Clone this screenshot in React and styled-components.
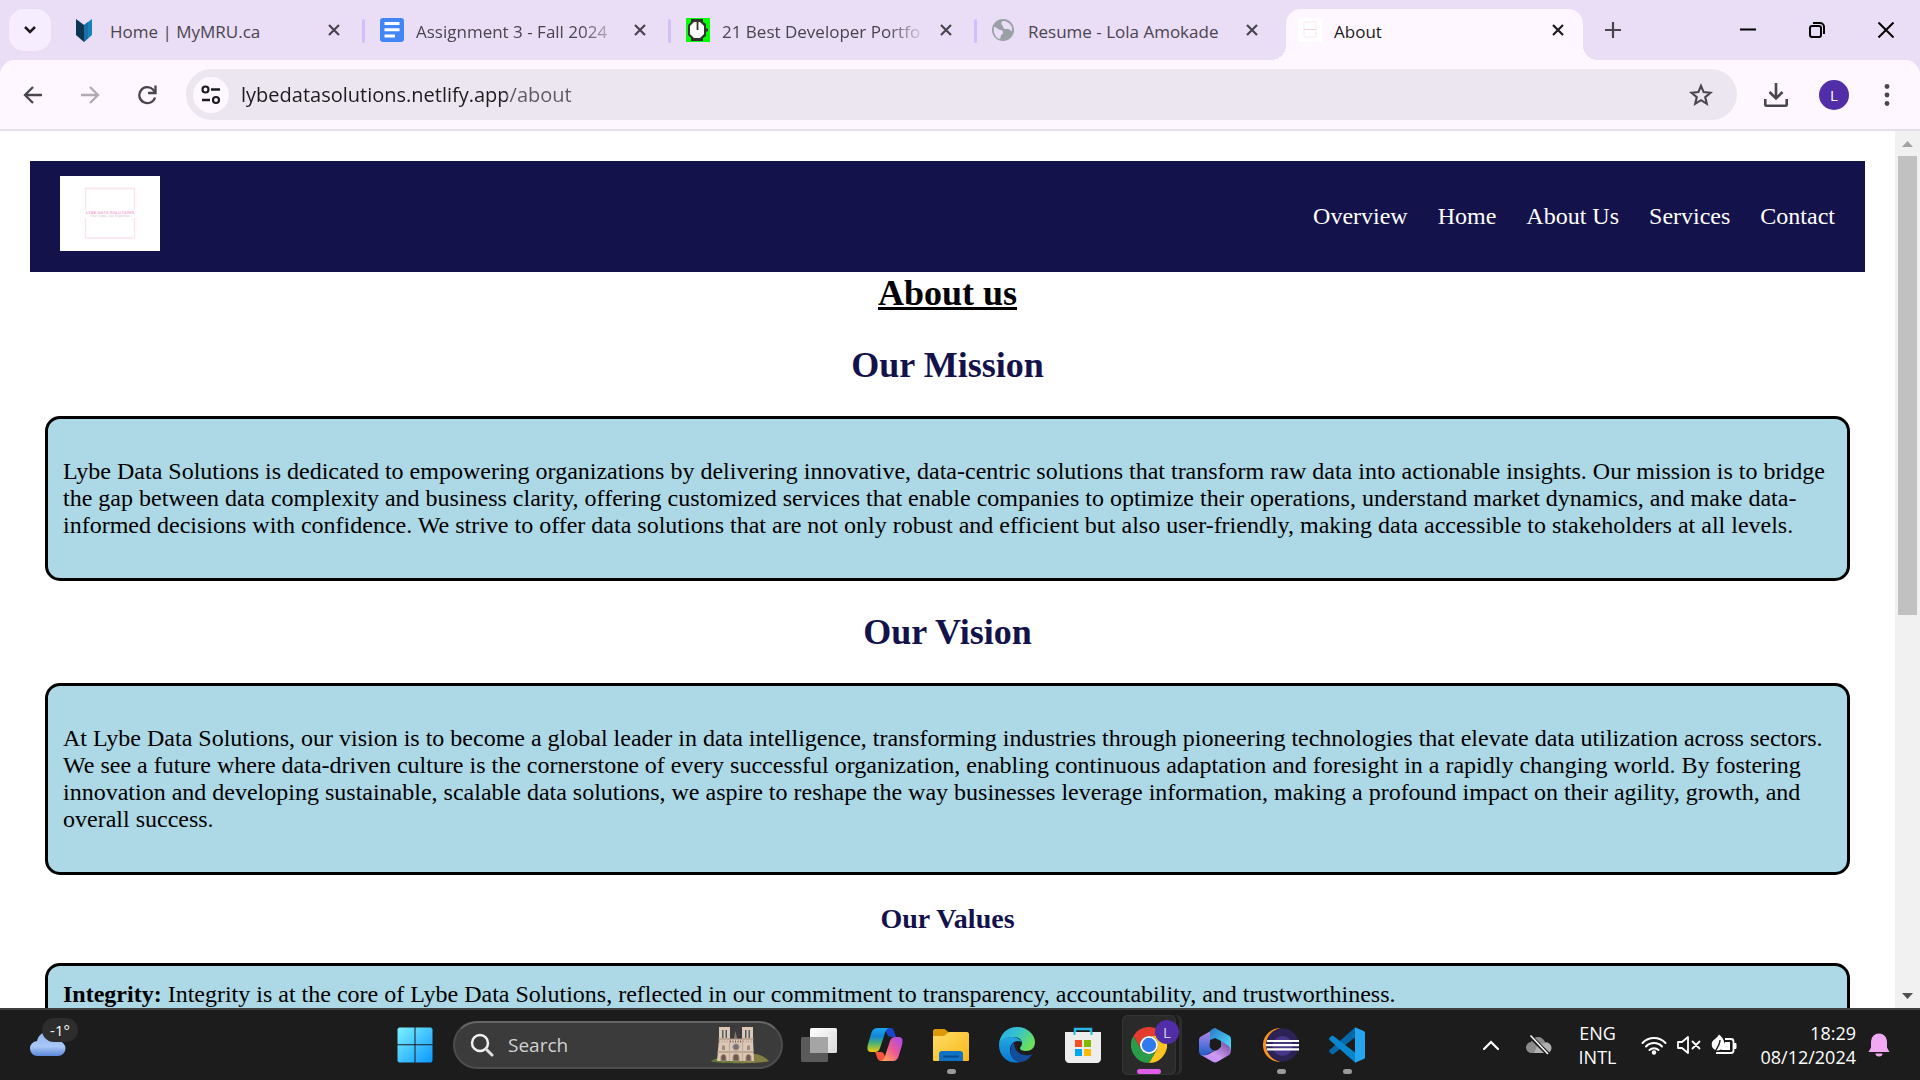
import React from "react";
import styled, { createGlobalStyle, css } from "styled-components";

const ui = `"Open Sans", "Noto Sans", sans-serif`;

const GlobalStyle = createGlobalStyle`
  *, *::before, *::after { box-sizing: border-box; }
  body { margin: 0; background: #fff; overflow: hidden; }
  button, input { font: inherit; color: inherit; }
  h1, h2, h3, p { margin: 0; }
`;

/* ---------- shell ---------- */

const Shell = styled.div`
  display: flex;
  flex-direction: column;
  height: 100vh;
  font-family: ${ui};
`;

const IconButton = styled.button`
  display: flex;
  align-items: center;
  justify-content: center;
  flex: none;
  width: ${(p) => p.$w}px;
  height: ${(p) => p.$h || p.$w}px;
  padding: 0;
  border: 0;
  border-radius: ${(p) => p.$radius || 0}px;
  background: ${(p) => p.$bg || "transparent"};
  color: ${(p) => p.$color || "#49454f"};
`;

/* ---------- tab strip ---------- */

const TabStrip = styled.header`
  display: flex;
  align-items: flex-end;
  height: 60px;
  flex: none;
  padding-left: 9px;
  background: #eaddf6;
`;

const StripCell = styled.div`
  display: flex;
  align-items: center;
  height: 51px;
  padding-bottom: 9px;
`;

const TabList = styled.div`
  display: flex;
  margin-left: 11px;
`;

const activeTab = css`
  background: #fef7ff;
  border-radius: 15px 15px 0 0;
  color: #1d1b20;
  &::before,
  &::after {
    content: "";
    position: absolute;
    bottom: 0;
    width: 15px;
    height: 15px;
  }
  &::before {
    right: 100%;
    background: radial-gradient(circle at 0 0, transparent 15px, #fef7ff 15px);
  }
  &::after {
    left: 100%;
    background: radial-gradient(circle at 100% 0, transparent 15px, #fef7ff 15px);
  }
`;

const Tab = styled.div`
  position: relative;
  display: flex;
  align-items: center;
  gap: 12px;
  width: 297px;
  height: 51px;
  padding: 0 13px 9px 12px;
  color: #49454f;
  ${(p) => p.$active && activeTab}
`;

const TabDivider = styled.div`
  width: 3px;
  height: 24px;
  margin: 10px 3px 0;
  background: #d3bdfc;
  border-radius: 2px;
  visibility: ${(p) => (p.$hidden ? "hidden" : "visible")};
`;

const TabTitle = styled.button`
  flex: 1;
  min-width: 0;
  padding: 3px 0 0;
  border: 0;
  background: none;
  text-align: left;
  font-size: 17px;
  line-height: 24px;
  white-space: nowrap;
  mask-image: ${(p) => (p.$fade ? "linear-gradient(to right, #000 165px, transparent 205px)" : "none")};
`;

const WindowControls = styled.div`
  display: flex;
  align-self: stretch;
  margin-left: auto;
`;

/* ---------- toolbar ---------- */

const ToolbarBack = styled.div`
  flex: none;
  background: #eaddf6;
`;

const Toolbar = styled.div`
  display: flex;
  align-items: center;
  height: 71px;
  padding: 0 9px;
  background: #fef7ff;
  border-bottom: 2px solid #e7dfec;
  border-radius: 15px 15px 0 0;
`;

const NavButtons = styled.div`
  display: flex;
  gap: 9px;
  margin-right: 15px;
`;

const AddressBar = styled.form`
  display: flex;
  align-items: center;
  flex: 1;
  height: 51px;
  padding: 0 12px 0 7px;
  background: #ece6f0;
  border-radius: 26px;
`;

const AddressInput = styled.input`
  flex: 1;
  min-width: 0;
  margin-left: 12px;
  padding: 0;
  border: 0;
  outline: 0;
  font-size: 20px;
  line-height: 30px;
  color: #1d1b20;
  background: linear-gradient(to right, #1d1b20 266px, #5d5963 266px);
  background-clip: text;
  -webkit-text-fill-color: transparent;
`;

const ToolbarActions = styled.div`
  display: flex;
  align-items: center;
  margin-left: 12px;
`;

const ProfileButton = styled.button`
  width: 30px;
  height: 30px;
  margin: 0 14px 0 16px;
  padding: 0;
  border: 0;
  border-radius: 50%;
  background: #512da8;
  color: #fff;
  font-size: 15px;
  line-height: 30px;
`;

/* ---------- web page ---------- */

const Viewport = styled.div`
  display: flex;
  flex: 1;
  min-height: 0;
  background: #fff;
`;

const Page = styled.div`
  flex: 1;
  min-width: 0;
  padding: 30px 30px 0;
  overflow: hidden;
  font-family: "Liberation Serif", "Times New Roman", serif;
  font-size: 24px;
  line-height: 27px;
  color: #000;
`;

const SiteHeader = styled.div`
  display: flex;
  align-items: center;
  justify-content: space-between;
  padding: 15px 30px 21px;
  background: #13124b;
`;

const Logo = styled.a`
  display: block;
  width: 100px;
  height: 75px;
  background: #fff;
`;

const SiteNav = styled.nav`
  display: flex;
  gap: 30px;
  padding-top: 6px;
`;

const NavLink = styled.a`
  color: #fff;
  text-decoration: none;
`;

const Content = styled.main`
  display: flex;
  flex-direction: column;
  padding: 0 15px;
`;

const PageTitle = styled.h1`
  text-align: center;
  font-size: 36px;
  line-height: 42px;
  text-decoration: underline;
  text-decoration-thickness: 3px;
`;

const SectionTitle = styled.h2`
  margin: 30px 0;
  text-align: center;
  font-size: 36px;
  line-height: 42px;
  color: #13124b;
`;

const SubTitle = styled.h3`
  margin: 28px 0;
  text-align: center;
  font-size: 28px;
  line-height: 32px;
  color: #13124b;
`;

const Card = styled.section`
  padding: ${(p) => (p.$tight ? 15 : 39)}px 15px;
  background: #add8e6;
  border: 3px solid #000;
  border-radius: 15px;
`;

const Scrollbar = styled.div`
  display: flex;
  flex-direction: column;
  width: 25px;
  padding: 0 3px 0 3px;
  background: #f1f1f1;
`;

const Thumb = styled.div`
  flex: 459;
  background: #c1c1c1;
`;

const Track = styled.div`
  flex: 368;
`;

/* ---------- taskbar ---------- */

const Taskbar = styled.footer`
  display: flex;
  align-items: center;
  height: 72px;
  flex: none;
  padding: 0 30px 0 18px;
  background: #1c1c1c;
  border-top: 2px solid #3f3f3f;
  color: #fff;
`;

const Weather = styled.button`
  position: relative;
  display: flex;
  align-items: flex-end;
  width: 60px;
  height: 60px;
  padding: 0 0 19px 12px;
  border: 0;
  background: none;
`;

const Temperature = styled.span`
  position: absolute;
  top: 3px;
  right: 0;
  width: 36px;
  height: 24px;
  border-radius: 12px;
  background: #2d2d2d;
  font-size: 15px;
  line-height: 24px;
  text-align: center;
`;

const AppArea = styled.div`
  display: flex;
  align-items: center;
  margin-left: 304px;
`;

const SearchBox = styled.label`
  display: flex;
  align-items: center;
  width: 330px;
  height: 48px;
  margin: 0 3px 0 5px;
  padding: 0 12px 0 15px;
  gap: 14px;
  background: #3b3b3b;
  border: 2px solid #4d4d4d;
  border-top-color: #666;
  border-radius: 24px;
`;

const SearchInput = styled.input`
  flex: 1;
  min-width: 0;
  padding: 0;
  border: 0;
  outline: 0;
  background: none;
  font-size: 19px;
  line-height: 28px;
  &::placeholder {
    color: #d2d2d2;
    opacity: 1;
  }
`;

const AppButton = styled.button`
  position: relative;
  display: flex;
  align-items: center;
  justify-content: center;
  width: 54px;
  height: 60px;
  margin: 0 6px;
  padding: 0;
  border: 0;
  border-radius: 6px;
  background: ${(p) => (p.$state === "active" ? "#2a2a2a" : "transparent")};
  box-shadow: ${(p) =>
    p.$state === "active" ? "inset 0 0 0 1px #353535, 3px 0 0 #1c1c1c, 6px 0 0 #2d2d2d" : "none"};
  &::after {
    content: "";
    display: ${(p) => (p.$state ? "block" : "none")};
    position: absolute;
    bottom: 1px;
    width: ${(p) => (p.$state === "active" ? 24 : 9)}px;
    height: 5px;
    border-radius: 3px;
    background: ${(p) => (p.$state === "active" ? "#df5ee8" : "#9a9a9a")};
  }
`;

const AppBadge = styled.span`
  position: absolute;
  top: 5px;
  right: -3px;
  width: 24px;
  height: 24px;
  border-radius: 50%;
  background: #512da8;
  color: #d8cfec;
  font-size: 15px;
  line-height: 24px;
`;

const Tray = styled.div`
  display: flex;
  align-items: center;
  margin-left: auto;
  font-size: 18px;
  line-height: 24px;
`;

const TrayButton = styled.button`
  display: flex;
  align-items: center;
  gap: ${(p) => p.$gap || 0}px;
  height: 60px;
  margin-left: ${(p) => p.$space || 0}px;
  padding: 0;
  border: 0;
  background: none;
`;

const Stack = styled.span`
  display: flex;
  flex-direction: column;
  align-items: ${(p) => p.$align};
`;

/* ---------- drawings ---------- */

const Svg = ({ w = 24, h = w, box = `0 0 ${w} ${h}`, children, ...rest }) => (
  <svg width={w} height={h} viewBox={box} fill="none" aria-hidden="true" {...rest}>
    {children}
  </svg>
);

const CloseIcon = () => (
  <Svg w={12}><path d="M1 1l10 10M11 1L1 11" stroke="currentColor" strokeWidth="2.2" /></Svg>
);

const MruIcon = () => (
  <Svg w={24}>
    <path d="M2 1l8 6v17l-8-7z" fill="#0c3551" />
    <path d="M18 1l-8 6v17l8-7z" fill="#1482bd" />
    <path d="M10 7l4-3v16l-4 4z" fill="#1a70a6" />
  </Svg>
);

const DocsIcon = () => (
  <Svg w={24}>
    <rect width="24" height="24" rx="3" fill="#4285f4" />
    <path d="M4.500 5.500h15M4.500 11.800h15M4.500 18h10.500" stroke="#fff" strokeWidth="3" />
  </Svg>
);

const WatchIcon = () => (
  <Svg w={24}>
    <path fill="#0f0" d="M0 0h24v24H0z" />
    <path d="M5 1h12v3l3 2v4l2 1v2l-2 1v4l-3 2v3H5v-3l-3-3V7l3-3z" fill="#333" />
    <path d="M8 4h6l4 4v8l-4 4H8l-4-4V8z" fill="#fff" />
    <path d="M11.500 4v8" stroke="#333" strokeWidth="1.800" />
  </Svg>
);

const GlobeIcon = () => (
  <Svg w={24}>
    <circle cx="11" cy="12" r="11" fill="#9aa0a6" />
    <path d="M2 9c3 0 3 2 6 3 3 0 3 1 3 3s-2 1-2 3l-1 3C4 20 1 16 2 9zM12 3c-3 0-3 2-2 4 2 1 0 3 3 4h3c2 0 2 2 4 2 1-4-2-9-8-10z" fill="#eaddf6" />
  </Svg>
);

const LybeIcon = () => (
  <Svg w={24}>
    <path fill="#fff" d="M0 0h24v24H0z" />
    <path d="M6 4h12v15H6z" stroke="#fbe6f0" />
    <path d="M6 11.500h12" stroke="#f6cfe1" />
  </Svg>
);

const LogoArt = () => (
  <Svg w={100} h={75}>
    <path d="M25.500 34V12.500h49V34M25.500 42v20h49V42" stroke="#fbe2f0" strokeWidth="1.400" />
    <text x="50" y="37.500" textAnchor="middle" fontFamily="Liberation Sans, sans-serif" fontWeight="bold" fontSize="4.200" textRendering="geometricPrecision" fill="#f5a9d3">LYBE DATA SOLUTIONS</text>
    <text x="50" y="41" textAnchor="middle" fontFamily="Liberation Sans, sans-serif" fontSize="3.600" textRendering="geometricPrecision" fill="#d9bfd3">Your Data, Our Expertise</text>
  </Svg>
);

const WindowsIcon = () => (
  <Svg w={36}>
    <defs>
      <linearGradient id="win" x1="0" y1="0" x2="1" y2="1">
        <stop stopColor="#7cf1ff" /><stop offset="1" stopColor="#0a97ff" />
      </linearGradient>
    </defs>
    <path d="M2 .5h15.500v16.800H.5V2zM18.500.5H34l1.500 1.500v15.300h-17zM.5 18.300h17v17.200H2L.5 34zM18.500 18.300h17V34L34 35.500H18.500z" fill="url(#win)" />
  </Svg>
);

const CathedralIcon = () => (
  <Svg w={58} h={38}>
    <path d="M0 35c8-4 14-4 20-4 10 0 16-3 24-3 4 0 10 3 14 7-8 3-50 3-58 0z" fill="#827f43" />
    <path d="M0 35c6-4 10-4 20-3l10 4c-10 1-25 1-30-1z" fill="#5c7a35" />
    <path d="M24.500 5l2 9h-4z" fill="#85766f" />
    <path d="M8 1h11v12h12V1h11v12l1 22H6l2-22z" fill="#dcc7b5" />
    <path d="M11 4h1.500v8H11zM14.500 4H16v8h-1.500zM34 4h1.500v8H34zM37.500 4H39v8h-1.500z" fill="#4d6068" />
    <path d="M7 13h36M6 26h37" stroke="#a08977" strokeWidth="1.200" />
    <path d="M19 15.500h12" stroke="#6e5c52" strokeWidth="2" strokeDasharray="1 1.500" />
    <path d="M8 15.500h10M32 15.500h10" stroke="#b59f8f" strokeWidth="2" strokeDasharray="1 1.500" />
    <circle cx="25" cy="21" r="3.200" fill="#75707b" stroke="#b59d8b" />
    <path d="M11 24v-4a2 2 0 013 0v4zM36 24v-4a2 2 0 013 0v4z" fill="#a08c7e" />
    <path d="M10 35v-4a2.500 2.500 0 015 0v4zM22 35v-4a3 3 0 016 0v4zM35 35v-4a2.500 2.500 0 015 0v4z" fill="#6d5950" stroke="#a98d79" />
    <path d="M18.500 13v22M31.500 13v22" stroke="#c2aa97" strokeWidth="1.300" />
  </Svg>
);

const TaskViewIcon = () => (
  <Svg w={36}>
    <defs>
      <linearGradient id="tvw" x1="0" y1="0" x2="1" y2="1">
        <stop stopColor="#fff" /><stop offset="1" stopColor="#d9d9d9" />
      </linearGradient>
    </defs>
    <rect x="9" y="1" width="27" height="25" rx="1.500" fill="url(#tvw)" />
    <rect y="10" width="27" height="25" rx="1.500" fill="#5a5a5a" />
    <path d="M9 10h18v16H9z" fill="#a5a5a5" />
  </Svg>
);

const CopilotIcon = () => (
  <Svg w={36}>
    <defs>
      <linearGradient id="cpa" x1="0" y1="0" x2="0" y2="1">
        <stop stopColor="#1ba4ee" /><stop offset=".35" stopColor="#1286d8" />
        <stop offset=".65" stopColor="#4fb56c" /><stop offset="1" stopColor="#f3cb0b" />
      </linearGradient>
      <linearGradient id="cpb" x1="1" y1="0" x2="0" y2="1">
        <stop stopColor="#a04af0" /><stop offset=".5" stopColor="#ee5a94" /><stop offset="1" stopColor="#ffb14a" />
      </linearGradient>
    </defs>
    <path d="M17 1h6c3 0 4 2 5 6l1 3h-4c-3 0-4-1-5-3z" fill="#1b45c9" />
    <path d="M19 34h-5c-3 0-4-3-5-7l-1-2h6c2 0 3 2 4 4z" fill="#f5553d" />
    <path d="M10 1h12c-3 1-4 4-5 8l-4 12c-1 3-3 4-5 4H4c-4 0-4-4-3-8l3-10c1-4 3-6 6-6z" fill="url(#cpa)" />
    <path d="M26 34H14c3-1 4-4 5-8l4-12c1-3 3-4 5-4h4c4 0 4 4 3 8l-3 10c-1 4-3 6-6 6z" fill="url(#cpb)" />
  </Svg>
);

const FolderIcon = () => (
  <Svg w={36}>
    <defs>
      <linearGradient id="fold" x1="0" y1="0" x2="1" y2="1">
        <stop stopColor="#ffdc6b" /><stop offset="1" stopColor="#f9b916" />
      </linearGradient>
    </defs>
    <path d="M0 4c0-1 1-2 2-2h9c2 0 3 3 5 3v5H0z" fill="#dc9a06" />
    <path d="M0 9h10c3 0 4-4 7-4h17c1 0 2 1 2 2v26c0 1-1 1-2 1H2c-1 0-2 0-2-1z" fill="url(#fold)" />
    <path d="M6 34v-7c0-2 1-3 3-3h18c2 0 3 1 3 3v7z" fill="#0f72c6" />
    <path d="M11 29.500h14" stroke="#0a4a88" strokeWidth="2" strokeLinecap="round" />
  </Svg>
);

const EdgeIcon = () => (
  <Svg w={36}>
    <defs>
      <linearGradient id="eda" x1="0" y1="0" x2="1" y2=".5">
        <stop stopColor="#27a9e8" /><stop offset=".5" stopColor="#35c3cf" /><stop offset="1" stopColor="#6be05a" />
      </linearGradient>
      <linearGradient id="edb" x1="0" y1="0" x2="0" y2="1">
        <stop stopColor="#23a6e2" /><stop offset="1" stopColor="#0879d2" />
      </linearGradient>
    </defs>
    <path d="M0 17C1 7 8 0 18 0c11 0 18 8 18 15 0 6-4 9-9 9-4 0-6-1-6-3 0-1 2-2 2-5 0-4-4-6-9-6C8 10 2 12 0 17z" fill="url(#eda)" />
    <path d="M0 18c0-5 5-8 12-8 5 0 10 2 11 5-7-3-12 2-12 8 0 6 4 11 10 12-12 3-21-6-21-17z" fill="url(#edb)" />
    <path d="M15 15c-6 6-5 17 6 20 6 0 10-4 12-8-6 3-18 1-18-12z" fill="#134d9b" />
  </Svg>
);

const StoreIcon = () => (
  <Svg w={36}>
    <path d="M10 8V2h16v6" stroke="#29b5e8" strokeWidth="2.500" />
    <path d="M0 5h36v27c0 2-2 4-4 4H4c-2 0-4-2-4-4z" fill="#ededed" />
    <path d="M9.500 8V5M26.500 8V5" stroke="#29b5e8" strokeWidth="2" />
    <path d="M10 13h7v7h-7z" fill="#f25022" /><path d="M19 13h7v7h-7z" fill="#7fba00" />
    <path d="M10 22h7v7h-7z" fill="#00a4ef" /><path d="M19 22h7v7h-7z" fill="#ffb900" />
  </Svg>
);

const ChromeIcon = () => (
  <Svg w={36}>
    <path d="M2.400 9A18 18 0 0133.600 9H18a9 9 0 00-7.800 13.500z" fill="#e33b2e" />
    <path d="M33.600 9A18 18 0 0118 36l7.800-13.500A9 9 0 0018 9z" fill="#fcc31e" />
    <path d="M18 36A18 18 0 012.400 9l7.800 13.500A9 9 0 0025.800 22.500z" fill="#2a9d4a" />
    <circle cx="18" cy="18" r="9" fill="#fff" /><circle cx="18" cy="18" r="7.200" fill="#2f7bee" />
  </Svg>
);

const M365Icon = () => (
  <Svg w={36}>
    <defs>
      <linearGradient id="m3a" x1="0" y1="0" x2="0" y2="1">
        <stop stopColor="#c58be6" /><stop offset=".6" stopColor="#5b72dd" /><stop offset="1" stopColor="#1b5fc4" />
      </linearGradient>
      <linearGradient id="m3b" x1="0" y1="0" x2="1" y2="1">
        <stop stopColor="#2a79c9" /><stop offset="1" stopColor="#52e6ff" />
      </linearGradient>
      <linearGradient id="m3c" x1="0" y1="1" x2="1" y2="0">
        <stop stopColor="#b883f5" /><stop offset=".4" stopColor="#cf9af5" /><stop offset="1" stopColor="#6a4796" />
      </linearGradient>
    </defs>
    <path d="M19 1L4 9.500c-1 .5-2 2-2 3V24c0 3 2 5 5 5l11-6-5-3v-8z" fill="url(#m3a)" />
    <path d="M13 13V5c0-2 2-3 5-4l14 7.500c1 .5 2 2 2 3.500v12l-10-6v-4l-6-3z" fill="url(#m3b)" />
    <path d="M4 28c3 1 6 0 8-1l12-7v-6l8 5 2 4c0 3-1 4-2 5l-12 7c-1 .5-3 .5-4 0z" fill="url(#m3c)" />
    <circle cx="18" cy="18" r="5.500" fill="#1c1c1c" />
  </Svg>
);

const EclipseIcon = () => (
  <Svg w={36}>
    <path d="M18 1C8 1 0 8 0 18s8 17 18 17C9 33 5 27 5 18S9 3 18 1z" fill="#f7941e" />
    <circle cx="19.500" cy="18" r="16.500" fill="#2c2255" />
    <circle cx="19.500" cy="19" r="10" fill="#473788" />
    <path d="M4 14h32M3 18.200h33M4 22.400h32" stroke="#fff" strokeWidth="2.200" />
  </Svg>
);

const VsCodeIcon = () => (
  <Svg w={36}>
    <path d="M26 .5v10L4.500 27c-.7.500-1.500.5-2 0L.6 25.200c-.7-.7-.7-1.700 0-2.300z" fill="#0568a8" />
    <path d="M26 35.500v-10L4.500 9c-.7-.5-1.500-.5-2 0L.6 10.800c-.7.700-.7 1.700 0 2.300z" fill="#0a86cf" />
    <path d="M26 .2L34.700 4c.8.400 1.300 1 1.300 2v24c0 1-.5 1.600-1.300 2L26 35.800z" fill="#24a5ef" />
  </Svg>
);

const WeatherIcon = () => (
  <Svg w={36} h={24}>
    <defs>
      <linearGradient id="cld" x1="0" y1="0" x2="0" y2="1">
        <stop stopColor="#8fb4f2" /><stop offset=".6" stopColor="#aac8f7" /><stop offset="1" stopColor="#5b87d8" />
      </linearGradient>
    </defs>
    <path d="M8 24a7.500 7.500 0 01-1-15C8 4 12 0 17 0c6 0 10 3 11 9a7.500 7.500 0 010 15z" fill="url(#cld)" />
  </Svg>
);

const tabs = [
  { title: "Home | MyMRU.ca", Icon: MruIcon },
  { title: "Assignment 3 - Fall 2024", Icon: DocsIcon, fade: true },
  { title: "21 Best Developer Portfo", Icon: WatchIcon, fade: true },
  { title: "Resume - Lola Amokade", Icon: GlobeIcon },
  { title: "About", Icon: LybeIcon, active: true },
];

const apps = [
  { name: "Task view", Icon: TaskViewIcon },
  { name: "Copilot", Icon: CopilotIcon },
  { name: "File Explorer", Icon: FolderIcon, state: "open" },
  { name: "Edge", Icon: EdgeIcon },
  { name: "Microsoft Store", Icon: StoreIcon },
  { name: "Chrome", Icon: ChromeIcon, state: "active", badge: "L" },
  { name: "Microsoft 365", Icon: M365Icon },
  { name: "Eclipse", Icon: EclipseIcon, state: "open" },
  { name: "Visual Studio Code", Icon: VsCodeIcon, state: "open" },
];

export default function App() {
  return (
    <Shell>
      <GlobalStyle />
      <TabStrip>
        <StripCell>
          <IconButton $w={42} $radius={15} $bg="#f6edff" $color="#1d1b20" aria-label="Search tabs">
            <Svg w={14} h={10}><path d="M2 2l5 5 5-5" stroke="currentColor" strokeWidth="2.500" /></Svg>
          </IconButton>
        </StripCell>
        <TabList>
          {tabs.map(({ title, Icon, active, fade }, i) => (
            <React.Fragment key={title}>
              <Tab $active={active}>
                <Icon />
                <TabTitle $fade={fade}>{title}</TabTitle>
                <IconButton $w={24} $color="inherit" aria-label={`Close ${title}`}><CloseIcon /></IconButton>
              </Tab>
              <TabDivider $hidden={i > 2} />
            </React.Fragment>
          ))}
        </TabList>
        <StripCell>
          <IconButton $w={42} aria-label="New tab">
            <Svg w={16}><path d="M8 0v16M0 8h16" stroke="currentColor" strokeWidth="2.200" /></Svg>
          </IconButton>
        </StripCell>
        <WindowControls>
          <IconButton $w={69} $h={60} $color="#000" aria-label="Minimize">
            <Svg w={16}><path d="M0 7.500h16" stroke="currentColor" strokeWidth="2" /></Svg>
          </IconButton>
          <IconButton $w={69} $h={60} $color="#000" aria-label="Restore">
            <Svg w={16}>
              <rect x="1" y="4" width="11" height="11" rx="2" stroke="currentColor" strokeWidth="2" />
              <path d="M4 1h7a4 4 0 014 4v7" stroke="currentColor" strokeWidth="2" />
            </Svg>
          </IconButton>
          <IconButton $w={69} $h={60} $color="#000" aria-label="Close window">
            <Svg w={16}><path d="M.5.5l15 15M15.500.5l-15 15" stroke="currentColor" strokeWidth="2" /></Svg>
          </IconButton>
        </WindowControls>
      </TabStrip>

      <ToolbarBack>
        <Toolbar>
          <NavButtons>
            <IconButton $w={48} aria-label="Back">
              <Svg w={20}><path d="M19 10H2M10 2l-8 8 8 8" stroke="currentColor" strokeWidth="2.300" /></Svg>
            </IconButton>
            <IconButton $w={48} $color="#b0aab4" aria-label="Forward">
              <Svg w={20}><path d="M1 10h17M10 2l8 8-8 8" stroke="currentColor" strokeWidth="2.300" /></Svg>
            </IconButton>
            <IconButton $w={48} aria-label="Reload">
              <Svg w={20}>
                <path d="M18 12.500A8 8 0 1116 4.500l2 2.500" stroke="currentColor" strokeWidth="2.300" />
                <path d="M18.500.5v7.500H11" stroke="currentColor" strokeWidth="2.300" />
              </Svg>
            </IconButton>
          </NavButtons>
          <AddressBar onSubmit={(e) => e.preventDefault()}>
            <IconButton type="button" $w={36} $radius={18} $bg="#fef7ff" $color="#1d1b20" aria-label="View site information">
              <Svg w={20}>
                <circle cx="4.500" cy="4.500" r="3" stroke="currentColor" strokeWidth="2.200" />
                <path d="M10 4.500h9M1 15h8" stroke="currentColor" strokeWidth="2.400" />
                <circle cx="15" cy="15" r="3" stroke="currentColor" strokeWidth="2.200" />
              </Svg>
            </IconButton>
            <AddressInput aria-label="Address and search bar" defaultValue="lybedatasolutions.netlify.app/about" />
            <IconButton type="button" $w={48} aria-label="Bookmark this tab">
              <Svg w={24}>
                <path d="M12 2.800l2.600 6.300 6.800.6-5.200 4.400 1.600 6.700-5.800-3.600-5.800 3.600 1.600-6.700-5.200-4.400 6.800-.6z" stroke="currentColor" strokeWidth="2.100" />
              </Svg>
            </IconButton>
          </AddressBar>
          <ToolbarActions>
            <IconButton $w={54} $h={48} aria-label="Downloads">
              <Svg w={24}>
                <path d="M12 0v15M5.500 9l6.500 6.500L18.500 9" stroke="currentColor" strokeWidth="2.600" />
                <path d="M1.300 16v5.500c0 .7.500 1.200 1.200 1.200h19c.7 0 1.200-.5 1.200-1.200V16" stroke="currentColor" strokeWidth="2.600" />
              </Svg>
            </IconButton>
            <ProfileButton aria-label="Profile L">L</ProfileButton>
            <IconButton $w={48} aria-label="Menu">
              <Svg w={6} h={22}>
                <g fill="currentColor"><circle cx="3" cy="2.500" r="2.400" /><circle cx="3" cy="11" r="2.400" /><circle cx="3" cy="19.500" r="2.400" /></g>
              </Svg>
            </IconButton>
          </ToolbarActions>
        </Toolbar>
      </ToolbarBack>

      <Viewport>
        <Page>
          <SiteHeader>
            <Logo href="#home" aria-label="Lybe Data Solutions"><LogoArt /></Logo>
            <SiteNav>
              {["Overview", "Home", "About Us", "Services", "Contact"].map((name) => (
                <NavLink key={name} href="#about">{name}</NavLink>
              ))}
            </SiteNav>
          </SiteHeader>
          <Content>
            <PageTitle>About us</PageTitle>
            <SectionTitle>Our Mission</SectionTitle>
            <Card>
              <p>
                Lybe Data Solutions is dedicated to empowering organizations by delivering innovative, data-centric
                solutions that transform raw data into actionable insights. Our mission is to bridge the gap between
                data complexity and business clarity, offering customized services that enable companies to optimize
                their operations, understand market dynamics, and make data-informed decisions with confidence. We
                strive to offer data solutions that are not only robust and efficient but also user-friendly, making
                data accessible to stakeholders at all levels.
              </p>
            </Card>
            <SectionTitle>Our Vision</SectionTitle>
            <Card>
              <p>
                At Lybe Data Solutions, our vision is to become a global leader in data intelligence, transforming
                industries through pioneering technologies that elevate data utilization across sectors. We see a
                future where data-driven culture is the cornerstone of every successful organization, enabling
                continuous adaptation and foresight in a rapidly changing world. By fostering innovation and
                developing sustainable, scalable data solutions, we aspire to reshape the way businesses leverage
                information, making a profound impact on their agility, growth, and overall success.
              </p>
            </Card>
            <SubTitle>Our Values</SubTitle>
            <Card $tight>
              <p>
                <b>Integrity:</b> Integrity is at the core of Lybe Data Solutions, reflected in our commitment to
                transparency, accountability, and trustworthiness.
              </p>
            </Card>
          </Content>
        </Page>
        <Scrollbar>
          <IconButton $w={19} $h={25} $color="#a3a3a3" aria-label="Scroll up">
            <Svg w={11} h={6}><path d="M0 6l5.500-6L11 6z" fill="currentColor" /></Svg>
          </IconButton>
          <Thumb />
          <Track />
          <IconButton $w={19} $h={25} $color="#505050" aria-label="Scroll down">
            <Svg w={11} h={6}><path d="M0 0l5.500 6L11 0z" fill="currentColor" /></Svg>
          </IconButton>
        </Scrollbar>
      </Viewport>

      <Taskbar>
        <Weather aria-label="Weather -1°">
          <WeatherIcon />
          <Temperature>-1°</Temperature>
        </Weather>
        <AppArea>
          <AppButton aria-label="Start"><WindowsIcon /></AppButton>
          <SearchBox>
            <Svg w={24}>
              <circle cx="10" cy="10" r="8" stroke="#f1f1f1" strokeWidth="2.500" />
              <path d="M16 16l6 6" stroke="#e0e0e0" strokeWidth="3" strokeLinecap="round" />
            </Svg>
            <SearchInput placeholder="Search" aria-label="Search" />
            <CathedralIcon />
          </SearchBox>
          {apps.map(({ name, Icon, state, badge }) => (
            <AppButton key={name} aria-label={badge ? `${name} ${badge}` : name} $state={state}>
              <Icon />
              {badge && <AppBadge>{badge}</AppBadge>}
            </AppButton>
          ))}
        </AppArea>
        <Tray>
          <TrayButton aria-label="Show hidden icons">
            <Svg w={16} h={10}><path d="M1 9l7-7 7 7" stroke="#fff" strokeWidth="2.200" strokeLinecap="round" /></Svg>
          </TrayButton>
          <TrayButton $space={27} aria-label="OneDrive">
            <Svg w={26} h={22}>
              <path d="M6 19a5.500 5.500 0 01-1-11c1-3 4-5 7-5s6 2 7 5a5.500 5.500 0 011 11z" fill="#8b8b8b" />
              <path d="M8 19l4-9 9-1a5 5 0 01-1 10z" fill="#b0b0b0" />
              <path d="M4 2l18 18" stroke="#1c1c1c" strokeWidth="4" />
              <path d="M4.500 1.500L22 20" stroke="#fff" strokeWidth="1.600" />
            </Svg>
          </TrayButton>
          <TrayButton $space={27}>
            <Stack $align="center"><span>ENG</span><span>INTL</span></Stack>
          </TrayButton>
          <TrayButton $space={25} $gap={10} aria-label="Network, sound and battery">
            <Svg w={26} h={20}>
              <g stroke="#fff" strokeWidth="2" strokeLinecap="round">
                <path d="M1.500 8a16 16 0 0123 0M5 11.500a11 11 0 0116 0M8.500 15a6.500 6.500 0 019 0" />
              </g>
              <circle cx="13" cy="17.500" r="2.200" fill="#fff" />
            </Svg>
            <Svg w={24} h={18}>
              <path d="M1 6h4l6-5v16l-6-5H1z" stroke="#fff" strokeWidth="1.800" strokeLinejoin="round" />
              <path d="M15.500 5.500l7 7M22.500 5.500l-7 7" stroke="#fff" strokeWidth="1.800" strokeLinecap="round" />
            </Svg>
            <Svg w={26} h={22}>
              <path d="M14 5h6c1.500 0 2.500 1 2.500 2.500v9c0 1.500-1 2.500-2.500 2.500H5" stroke="#fff" strokeWidth="1.800" />
              <path d="M23 9.500h2v5h-2z" fill="#fff" stroke="#fff" />
              <path d="M14 8h5v8h-9z" fill="#fff" />
              <path d="M8 .5c4 3 6 7 5 11-1 3-4 5-7 5-4-1-6-4-5-8 1-3 5-4 7-8z" fill="#fff" />
              <path d="M9 6c0 5-3 8-6 13" stroke="#1c1c1c" strokeWidth="1.400" />
            </Svg>
          </TrayButton>
          <TrayButton $space={23} $gap={12}>
            <Stack $align="flex-end"><span>18:29</span><span>08/12/2024</span></Stack>
            <Svg w={22} h={24}>
              <path d="M11 .5a8 8 0 018 8v6l2.500 4.500H.5L3 14.500v-6a8 8 0 018-8z" fill="#f0a9f2" />
              <path d="M7.500 20.500h7a3.500 3 0 01-7 0z" fill="#f0a9f2" />
            </Svg>
          </TrayButton>
        </Tray>
      </Taskbar>
    </Shell>
  );
}
